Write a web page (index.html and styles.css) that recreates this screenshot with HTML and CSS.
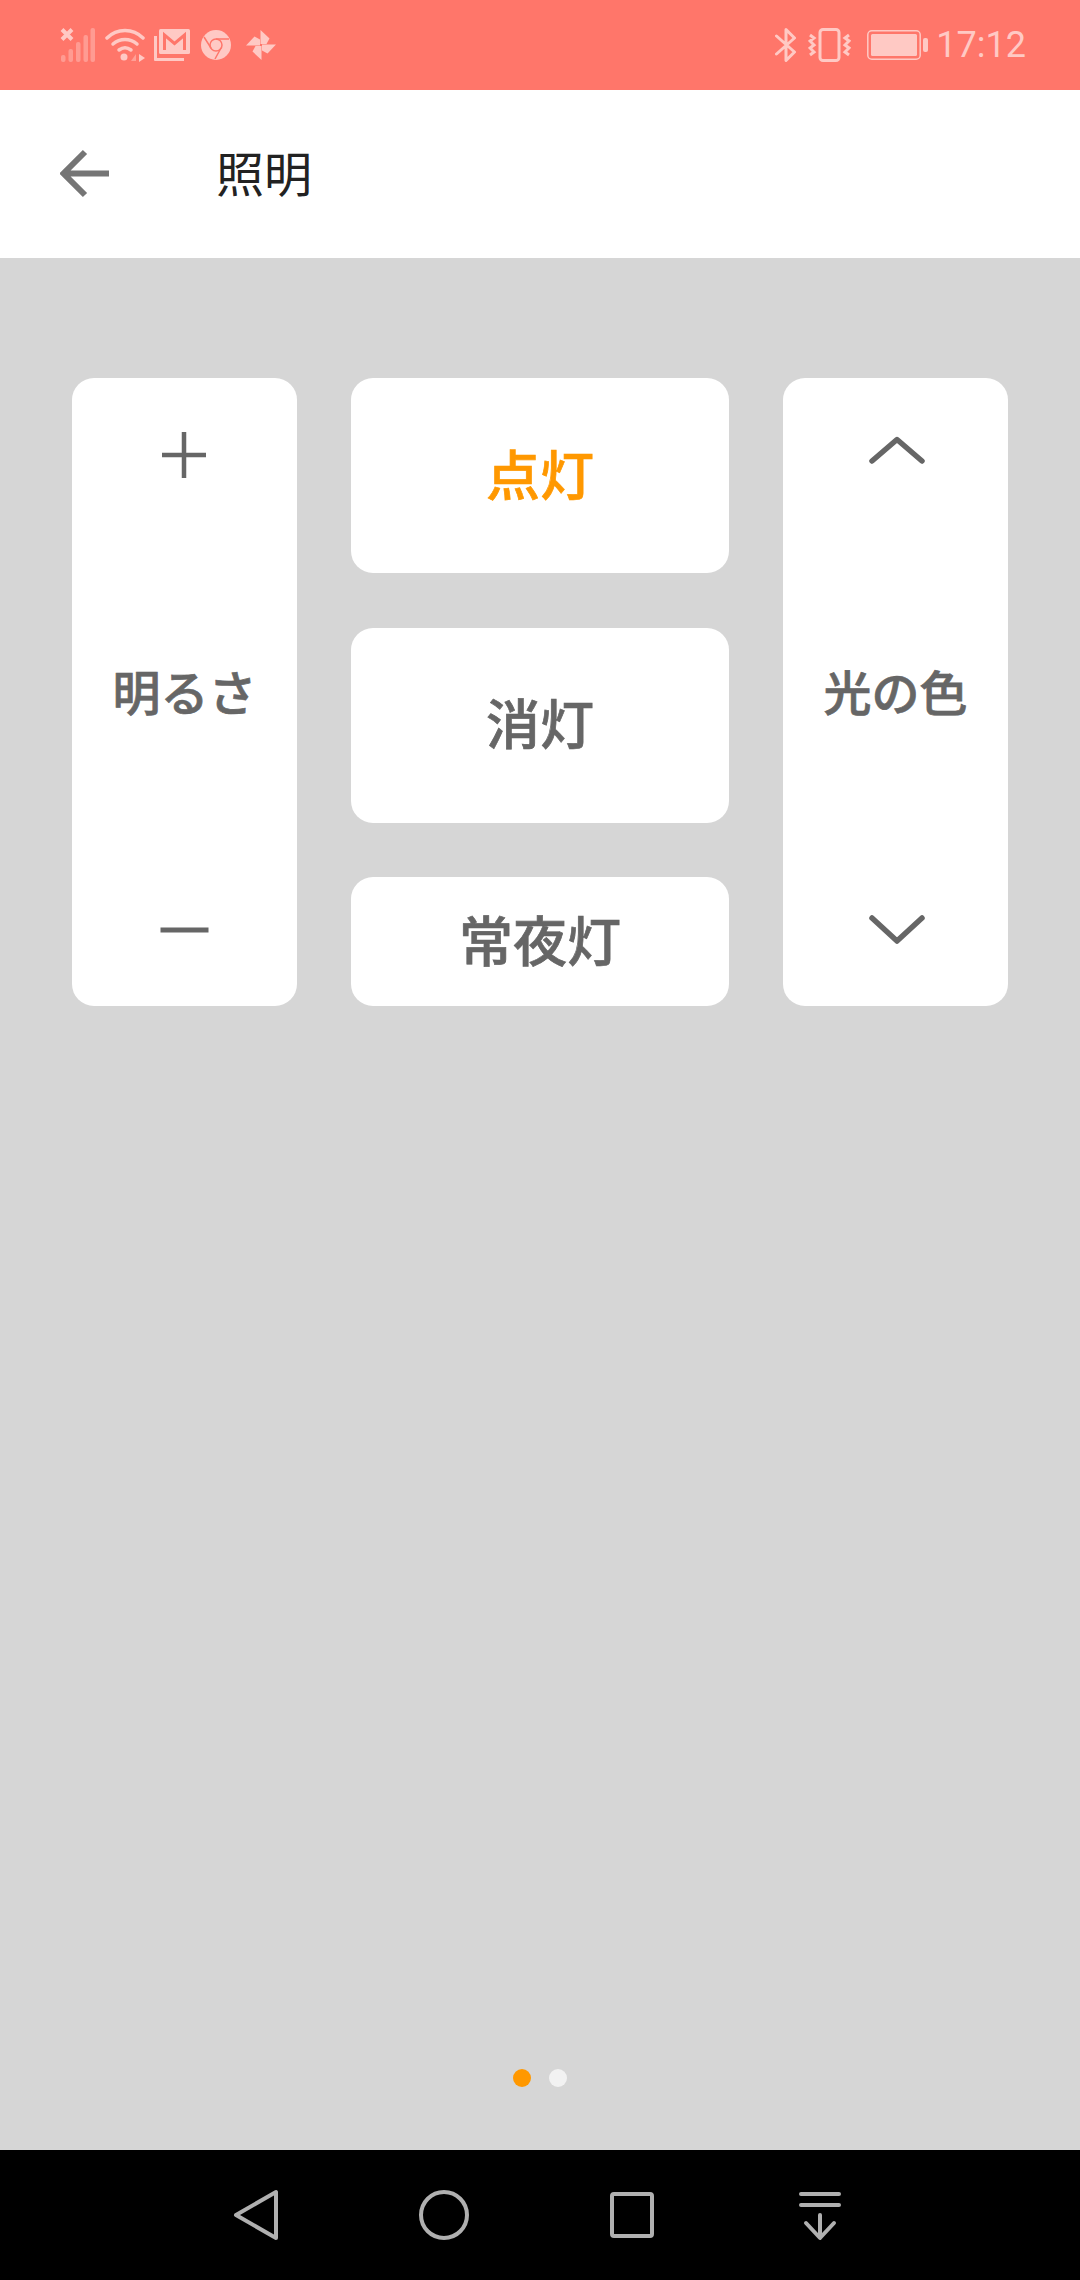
FILE: index.html
```html
<!DOCTYPE html>
<html lang="ja">
<head>
    <meta charset="UTF-8">
    <meta name="viewport" content="width=device-width, initial-scale=1.0">
    <title>照明</title>
    <link rel="stylesheet" href="styles.css">
</head>
<body>
    <div class="status-bar">
        <div class="status-left">
            <svg width="35" height="34" viewBox="0 0 35 34" fill="currentColor">
                <path d="M2 1.500l10 10M12 1.500l-10 10" stroke="currentColor" stroke-width="4" fill="none"/>
                <g opacity="0.45">
                    <rect x="1" y="27" width="4.500" height="7" rx="2"/>
                    <rect x="8.500" y="21" width="4.500" height="13" rx="2"/>
                    <rect x="16" y="14" width="4.500" height="20" rx="2"/>
                    <rect x="23.500" y="7" width="4.500" height="27" rx="2"/>
                    <rect x="30.500" y="0" width="4.500" height="34" rx="2"/>
                </g>
            </svg>
            <svg class="ic-wifi" width="40" height="34" viewBox="0 0 40 34" fill="none" stroke="currentColor" stroke-width="3.500" stroke-linecap="round">
                <path d="M2 10c10-10 26-10 36 0"/>
                <path d="M8 16c7-6 17-6 24 0"/>
                <path d="M14 22c4-3 8-3 12 0"/>
                <circle cx="19" cy="29" r="3.500" fill="currentColor" stroke="none"/>
                <path d="M26 33l5-7 0 7z" fill="currentColor" stroke="none" opacity="0.5"/>
                <path d="M34 26l6 4-6 4z" fill="currentColor" stroke="none"/>
            </svg>
            <svg class="ic-mail" width="36" height="32" viewBox="0 0 36 32" fill="currentColor">
                <rect x="5" y="0" width="31" height="25" rx="1.500"/>
                <path d="M10.500 21v-15l10 8.500 10-8.500v15" fill="none" stroke="#ff766a" stroke-width="3"/>
                <path d="M0 7h3v22h27v3h-29a1 1 0 0 1-1-1z"/>
            </svg>
            <svg class="ic-chrome" width="30" height="30" viewBox="0 0 30 30">
                <circle cx="15" cy="15" r="15" fill="currentColor"/>
                <circle cx="15" cy="15" r="6" fill="none" stroke="#ff766a" stroke-width="1.500"/>
                <path d="M15 9h13M20 18l-6 11M10 18l-7-11" stroke="#ff766a" stroke-width="1.500" fill="none"/>
            </svg>
            <svg class="ic-wheel" width="32" height="32" viewBox="0 0 32 32" fill="currentColor">
                <path d="M15.500 15V1l9 8.500-3 5.500z"/>
                <path d="M15.500 15V1l9 8.500-3 5.500z" transform="rotate(90 16 16)"/>
                <path d="M15.500 15V1l9 8.500-3 5.500z" transform="rotate(180 16 16)"/>
                <path d="M15.500 15V1l9 8.500-3 5.500z" transform="rotate(270 16 16)"/>
            </svg>
        </div>
        <div class="status-right">
            <svg width="22" height="36" viewBox="0 0 22 36" fill="none" stroke="currentColor" stroke-width="3" stroke-linecap="round" stroke-linejoin="round">
                <path d="M1.500 9l18 16-8.500 8.500v-31l8.500 8.500-18 16"/>
            </svg>
            <svg class="ic-vibe" width="43" height="34" viewBox="0 0 43 34" fill="none" stroke="currentColor" stroke-width="3">
                <rect x="12" y="1.500" width="19" height="31" rx="3"/>
                <path d="M2 7l4 3-4 3 4 4-4 3 4 4-4 3M41 7l-4 3 4 3-4 4 4 3-4 4 4 3"/>
            </svg>
            <svg class="ic-batt" width="61" height="30" viewBox="0 0 61 30">
                <rect x="0.800" y="0.800" width="52.400" height="28.400" rx="4" fill="none" stroke="currentColor" stroke-width="1.500"/>
                <rect x="4" y="4" width="46" height="22" rx="1.500" fill="currentColor"/>
                <rect x="56" y="8" width="5" height="14" rx="2" fill="currentColor"/>
            </svg>
            <span class="clock">17:12</span>
        </div>
    </div>

    <header class="toolbar">
        <svg class="back" width="50" height="50" viewBox="0 0 50 50" fill="none" stroke="#757575" stroke-width="6">
            <path d="M49 24.500h-44M25 3l-21.500 21.500 21.500 21.500"/>
        </svg>
        <h1>照明</h1>
    </header>

    <main class="content">
        <div class="remote">
            <div class="card side">
                <svg width="60" height="60" viewBox="0 0 60 60" stroke="#666" stroke-width="4.500">
                    <path d="M7 30h44M29 7v46"/>
                </svg>
                <span class="label">明るさ</span>
                <svg width="60" height="60" viewBox="0 0 60 60" stroke="#666" stroke-width="5">
                    <path d="M5.500 30h48"/>
                </svg>
            </div>
            <div class="middle">
                <div class="card btn tall on">点灯</div>
                <div class="card btn tall">消灯</div>
                <div class="card btn short">常夜灯</div>
            </div>
            <div class="card side">
                <svg width="60" height="60" viewBox="0 0 60 60" fill="none" stroke="#666" stroke-width="5.500" stroke-linecap="round" stroke-linejoin="round">
                    <path d="M6 36l25-21.500 25 21.500"/>
                </svg>
                <span class="label">光の色</span>
                <svg width="60" height="60" viewBox="0 0 60 60" fill="none" stroke="#666" stroke-width="5.500" stroke-linecap="round" stroke-linejoin="round">
                    <path d="M6 18l25 23 25-23"/>
                </svg>
            </div>
        </div>
        <div class="pager">
            <span class="dot active"></span>
            <span class="dot"></span>
        </div>
    </main>

    <nav class="nav-bar">
        <svg width="60" height="60" viewBox="0 0 60 60" fill="none" stroke="#b0b0b0" stroke-width="4" stroke-linejoin="round">
            <path d="M50 7v46l-40-23z"/>
        </svg>
        <svg width="60" height="60" viewBox="0 0 60 60" fill="none" stroke="#b0b0b0" stroke-width="4">
            <circle cx="30" cy="30" r="23"/>
        </svg>
        <svg width="60" height="60" viewBox="0 0 60 60" fill="none" stroke="#b0b0b0" stroke-width="4">
            <rect x="10" y="9" width="40" height="42" rx="2"/>
        </svg>
        <svg width="60" height="60" viewBox="0 0 60 60" fill="none" stroke="#b0b0b0" stroke-width="4" stroke-linecap="round" stroke-linejoin="round">
            <path d="M11 9h38M11 20h38M30 30v21M16 38l14 15 14-15"/>
        </svg>
    </nav>
</body>
</html>
```

FILE: styles.css
```css
* {
    box-sizing: border-box;
}
html, body {
    height: 100%;
}
body {
    margin: 0;
    display: flex;
    flex-direction: column;
    height: 2280px;
    font-family: "Noto Sans CJK JP", "Noto Sans", sans-serif;
    background: #d6d6d6;
}
svg {
    display: block;
    flex: none;
}

.status-bar {
    height: 90px;
    padding: 0 54px 0 60px;
    display: flex;
    justify-content: space-between;
    align-items: center;
    background: #ff766a;
    color: #ffc9c4;
}
.status-left, .status-right {
    display: flex;
    align-items: center;
}
.ic-wifi {
    margin-left: 10px;
}
.ic-mail {
    margin-left: 9px;
}
.ic-chrome {
    margin-left: 11px;
}
.ic-wheel {
    margin-left: 14px;
}
.ic-vibe {
    margin-left: 11px;
}
.ic-batt {
    margin-left: 16px;
}
.clock {
    margin-left: 8px;
    font-family: Roboto, sans-serif;
    font-size: 36px;
    line-height: 1;
}

.toolbar {
    height: 168px;
    padding-left: 60px;
    display: flex;
    align-items: center;
    background: #fff;
}
.toolbar h1 {
    margin: 0 0 6px 106px;
    font-size: 48px;
    font-weight: 400;
    line-height: 1;
    color: #222;
}

.content {
    flex: 1;
    display: flex;
    flex-direction: column;
    justify-content: space-between;
    padding: 120px 72px 63px;
}
.remote {
    height: 628px;
    display: grid;
    grid-template-columns: 225px 378px 225px;
    column-gap: 54px;
}
.card {
    background: #fff;
    border-radius: 22px;
    color: #666;
    font-weight: 500;
    -webkit-text-stroke: 0.7px currentColor;
}
.side {
    padding: 47px 0 46px;
    display: flex;
    flex-direction: column;
    justify-content: space-between;
    align-items: center;
}
.label {
    margin-bottom: 6px;
    font-size: 48px;
    line-height: 60px;
}
.middle {
    display: flex;
    flex-direction: column;
    gap: 54.5px;
}
.btn {
    padding-bottom: 6px;
    display: flex;
    justify-content: center;
    align-items: center;
    font-size: 54px;
    line-height: 1;
}
.tall {
    height: 195px;
}
.short {
    flex: 1;
}
.on {
    color: #ff9800;
}

.pager {
    display: flex;
    justify-content: center;
    gap: 18px;
}
.dot {
    width: 18px;
    height: 18px;
    border-radius: 50%;
    background: #f2f2f2;
}
.dot.active {
    background: #ff9800;
}

.nav-bar {
    height: 130px;
    padding-right: 5px;
    display: flex;
    justify-content: center;
    align-items: center;
    gap: 128px;
    background: #000;
}
```
